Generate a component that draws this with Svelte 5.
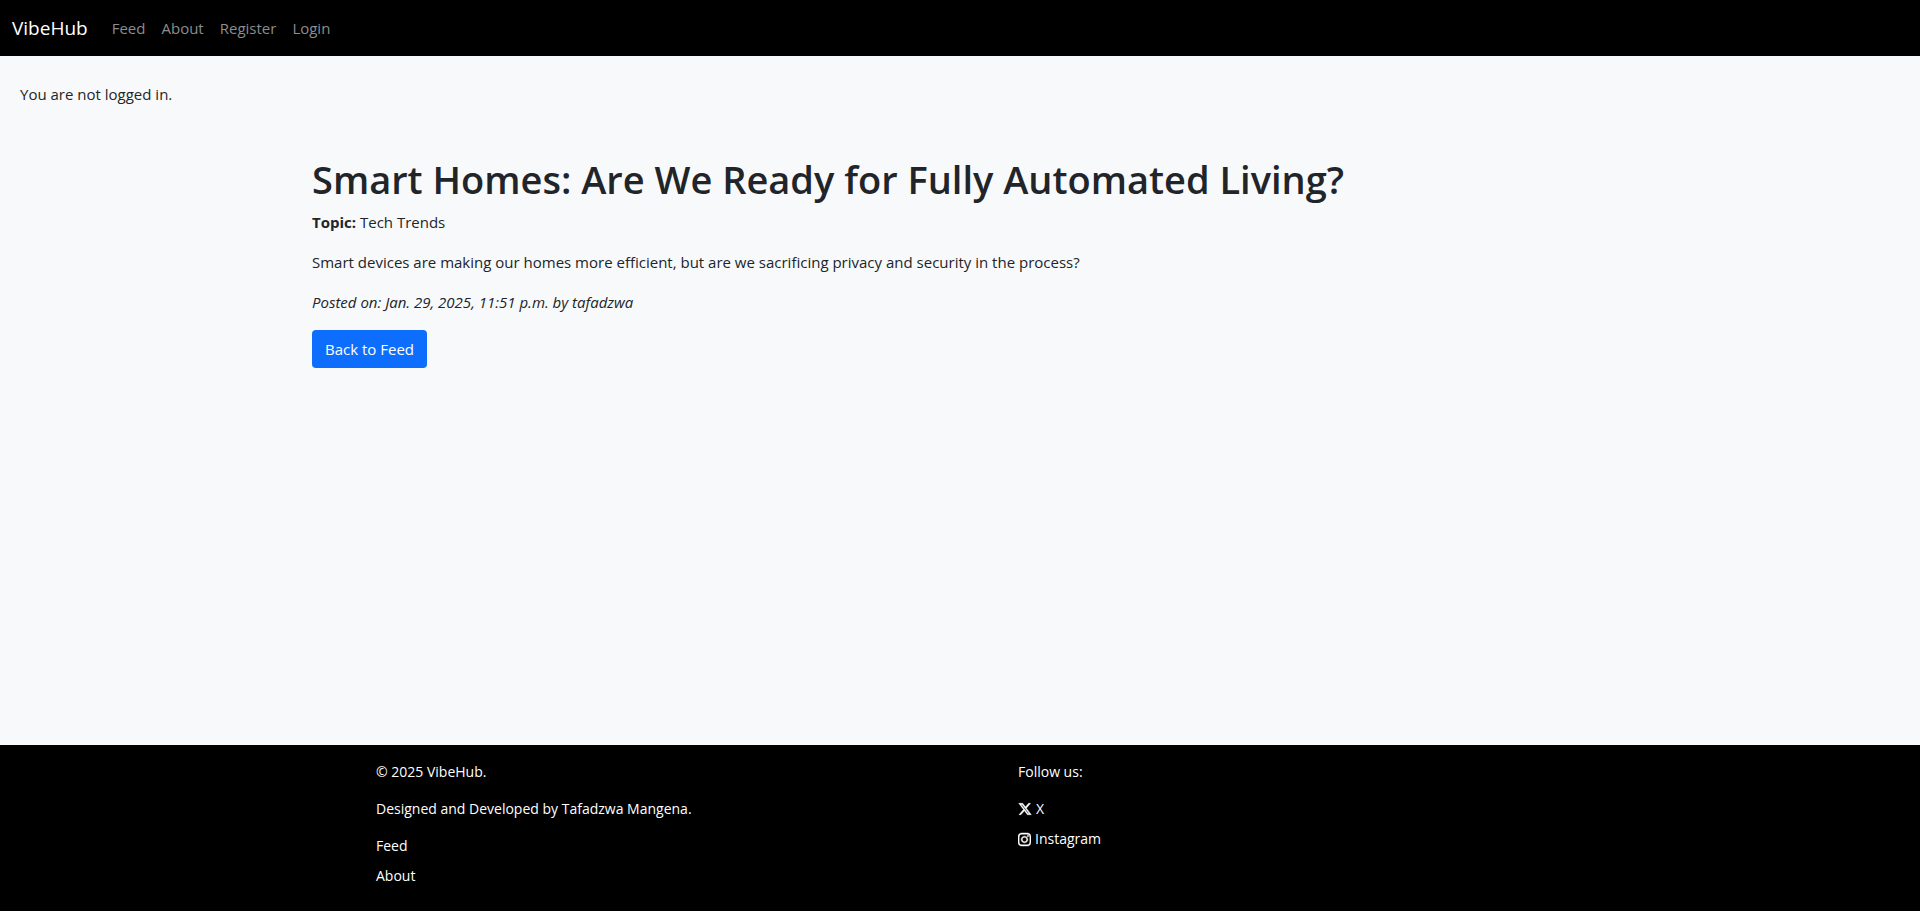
<script>
  const navLinks = ['Feed', 'About', 'Register', 'Login'];
  const footerLinks = ['Feed', 'About'];
</script>

<div class="page">
  <header>
    <nav class="navbar">
      <a class="brand" href="#home">VibeHub</a>
      <ul class="nav-list">
        {#each navLinks as label}
          <li><a href="#{label.toLowerCase()}">{label}</a></li>
        {/each}
      </ul>
    </nav>
  </header>

  <main>
    <p class="status">You are not logged in.</p>
    <article class="container">
      <h1>Smart Homes: Are We Ready for Fully Automated Living?</h1>
      <p><strong>Topic:</strong> Tech Trends</p>
      <p>Smart devices are making our homes more efficient, but are we sacrificing privacy and security in the process?</p>
      <p><em>Posted on: Jan. 29, 2025, 11:51 p.m. by tafadzwa</em></p>
      <a class="btn" href="#feed">Back to Feed</a>
    </article>
  </main>

  <footer>
    <div class="container footer-grid">
      <div>
        <p>© 2025 VibeHub.</p>
        <p>Designed and Developed by Tafadzwa Mangena.</p>
        <ul>
          {#each footerLinks as label}
            <li><a href="#{label.toLowerCase()}">{label}</a></li>
          {/each}
        </ul>
      </div>
      <div>
        <p>Follow us:</p>
        <ul>
          <li>
            <a href="#x">
              <svg width="14" height="14" viewBox="0 0 512 512" aria-hidden="true"><path d="M389.2 48h70.6L305.6 224.2 487 464H345L233.7 318.6 106.5 464H35.8L200.7 275.5 26.8 48H172.4L272.9 180.9 389.2 48zM364.4 421.8h39.1L151.1 88h-42L364.4 421.8z" /></svg>
              <span>X</span>
            </a>
          </li>
          <li>
            <a href="#instagram">
              <svg width="13" height="15" viewBox="0 0 448 512" aria-hidden="true"><path d="M224.1 141c-63.6 0-114.9 51.3-114.9 114.9s51.3 114.9 114.9 114.9S339 319.5 339 255.9 287.7 141 224.1 141zm0 189.6c-41.1 0-74.7-33.5-74.7-74.7s33.5-74.7 74.7-74.7 74.7 33.5 74.7 74.7-33.6 74.7-74.7 74.7zm146.4-194.3c0 14.9-12 26.8-26.8 26.8-14.9 0-26.8-12-26.8-26.8s12-26.8 26.8-26.8 26.8 12 26.8 26.8zm76.1 27.2c-1.7-35.9-9.9-67.7-36.2-93.9-26.2-26.2-58-34.4-93.9-36.2-37-2.1-147.9-2.1-184.9 0-35.8 1.7-67.6 9.9-93.9 36.1s-34.4 58-36.2 93.9c-2.1 37-2.1 147.9 0 184.9 1.7 35.9 9.9 67.7 36.2 93.9s58 34.4 93.9 36.2c37 2.1 147.9 2.1 184.9 0 35.9-1.7 67.7-9.9 93.9-36.2 26.2-26.2 34.4-58 36.2-93.9 2.1-37 2.1-147.8 0-184.8zM398.8 388c-7.8 19.6-22.9 34.7-42.6 42.6-29.5 11.7-99.5 9-132.1 9s-102.7 2.6-132.1-9c-19.6-7.8-34.7-22.9-42.6-42.6-11.7-29.5-9-99.5-9-132.1s-2.6-102.7 9-132.1c7.8-19.6 22.9-34.7 42.6-42.6 29.5-11.7 99.5-9 132.1-9s102.7-2.6 132.1 9c19.6 7.8 34.7 22.9 42.6 42.6 11.7 29.5 9 99.5 9 132.1s2.7 102.7-9 132.1z" /></svg>
              <span>Instagram</span>
            </a>
          </li>
        </ul>
      </div>
    </div>
  </footer>
</div>

<style>
  :global(body) {
    margin: 0;
  }
  .page {
    display: flex;
    flex-direction: column;
    min-height: 100vh;
    background: #f8f9fb;
    color: #212529;
    font-family: 'Segoe UI', 'Open Sans', 'Noto Sans', sans-serif;
    font-size: 15px;
    line-height: 24px;
  }
  .page * {
    box-sizing: border-box;
  }
  a {
    text-decoration: none;
  }
  ul {
    list-style: none;
    margin: 0;
    padding: 0;
  }
  .navbar {
    display: flex;
    align-items: center;
    min-height: 56px;
    padding: 8px 12px;
    background: #000;
  }
  .brand {
    margin-right: 16px;
    color: #fff;
    font-size: 19px;
    line-height: 30px;
  }
  .nav-list {
    display: flex;
  }
  .nav-list a {
    display: block;
    padding: 8px;
    color: #8c8c8c;
  }
  main {
    flex: 1;
    padding-top: 26px;
  }
  .status {
    margin: 0 20px 48px;
  }
  .container {
    width: 100%;
    max-width: 1320px;
    margin: 0 auto;
    padding: 0 12px;
  }
  h1 {
    margin: 0 0 6px;
    font-size: 38px;
    font-weight: 600;
    line-height: 50px;
  }
  article p {
    margin: 0 0 16px;
  }
  strong {
    font-weight: 700;
  }
  .btn {
    display: inline-block;
    padding: 7px 13px;
    border-radius: 4px;
    background: #0d6efd;
    color: #fff;
  }
  footer {
    padding: 16px 0;
    background: #000;
    color: #fff;
    font-size: 14px;
    line-height: 21px;
  }
  .footer-grid {
    display: grid;
    grid-template-columns: 1fr 1fr;
    gap: 40px;
    padding: 0 0 0 76px;
  }
  footer p {
    margin: 0 0 16px;
  }
  footer li {
    margin-bottom: 8px;
    line-height: 22px;
  }
  footer a {
    display: flex;
    align-items: center;
    gap: 4px;
    color: #fff;
  }
  footer svg {
    fill: #fff;
    stroke: #fff;
    stroke-width: 16;
  }
</style>
